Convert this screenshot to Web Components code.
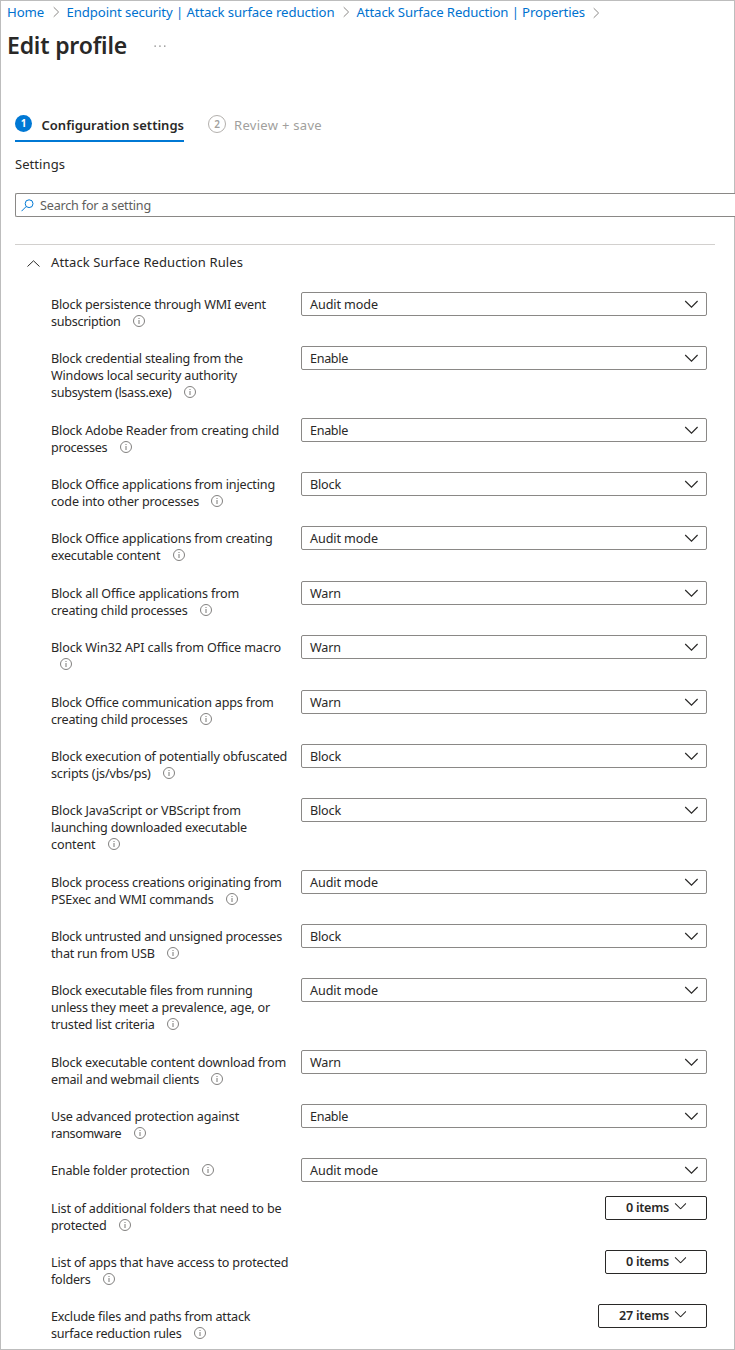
<!DOCTYPE html>
<html lang="en">
<head>
<meta charset="utf-8">
<title>Edit profile</title>
<style>
html,body{margin:0;background:#fff;height:1350px;overflow:hidden}
body{font-family:"Noto Sans","Open Sans",sans-serif;font-size:12.6px;color:#292827}
</style>
</head>
<body>
<profile-page></profile-page>
<script>
const define = (name, html, init) => {
  const t = document.createElement('template');
  t.innerHTML = html;
  customElements.define(name, class extends HTMLElement {
    constructor(){ super(); this.attachShadow({mode:'open'}).append(t.content.cloneNode(true)); }
    connectedCallback(){ if(init) init(this, this.shadowRoot); }
  });
};

/* A single line of text whose tracking is adjusted to an exact width. */
define('fit-line', `<style>:host{display:inline-block;white-space:nowrap;vertical-align:top}span{display:inline-block}</style><span><slot></slot></span>`, (el, root) => {
  const w = +el.getAttribute('w'), s = root.querySelector('span');
  const n = el.textContent.length;
  el.style.letterSpacing = ((w - s.getBoundingClientRect().width) / n) + 'px';
});

define('info-icon', `<style>:host{display:inline-block;width:12px;height:12px}svg{display:block}</style>
<svg width="12" height="12" viewBox="0 0 12 12" fill="none" stroke="#6a6968"><circle cx="6" cy="6" r="5.5" stroke-width=".85"/><path d="M6 5v4M6 3v1" stroke-width=".9"/></svg>`);

define('chevron-down', `<style>:host{display:block}svg{display:block}</style>
<svg width="14" height="8" viewBox="0 0 14 8" fill="none" stroke="#292827" stroke-width="1.15"><path d="M1.2 1 7.5 7.2 13.6 1"/></svg>`);

define('crumb-chevron', `<style>:host{display:block;width:7px;height:12px}svg{display:block}</style>
<svg width="7" height="12" viewBox="0 0 7 12" fill="none" stroke="#8a8886"><path d="M.7 1.2 5.6 6 .7 10.8"/></svg>`);

define('crumb-trail', `<style>
:host{display:flex;align-items:center;height:22px;padding-left:6px;font-size:13.2px;color:#0072cf}
crumb-chevron{margin-top:2px}
.a{margin:0 7px 0 8.5px}.b{margin:0 7px 0 8px}.c{margin-left:8px}
</style><fit-line w="37">Home</fit-line><crumb-chevron class="a"></crumb-chevron><fit-line w="268">Endpoint security | Attack surface reduction</fit-line><crumb-chevron class="b"></crumb-chevron><fit-line w="228.5">Attack Surface Reduction | Properties</fit-line><crumb-chevron class="c"></crumb-chevron>`);

define('page-title', `<style>
:host{display:flex;align-items:center;height:44px;padding-left:6px;font-size:23px;font-weight:600;color:#292827}
h1{margin:0;font:inherit;line-height:44px}
svg{margin-left:26.5px;margin-top:2px}
</style><h1><fit-line w="120">Edit profile</fit-line></h1>
<svg width="12" height="4" viewBox="0 0 12 4" fill="#777"><path d="M.5 1.5h1.3v1.3H.5zM5.3 1.5h1.3v1.3H5.3zM10.1 1.5h1.3v1.3h-1.3z"/></svg>`);

define('wizard-step', `<style>
:host{display:flex;box-sizing:border-box;height:32px;font-size:13px;color:#a19f9d}
:host([active]){border-bottom:2px solid #0078d4;color:#292827;font-weight:600}
b{box-sizing:border-box;width:18px;height:18px;border:1px solid #b3b0ad;border-radius:50%;font-size:10px;line-height:16px;text-align:center;font-weight:600;margin:5px 8px 0 0}
:host([active]) b{width:17px;height:17px;border:0;background:#0078d4;color:#fff;line-height:17px;margin:5px 9.5px 0 0;font-weight:700}
.t{line-height:18px;margin-top:6px}
</style><b></b><div class="t"><slot></slot></div>`, (el, root) => root.querySelector('b').textContent = el.getAttribute('n'));

define('search-field', `<style>
:host{display:flex;align-items:center;box-sizing:border-box;width:720px;height:24px;border:1px solid #8a8886;border-right:0;border-radius:2px 0 0 2px;padding-left:5px;color:#605e5c;background:#fff;position:relative}
svg{margin-right:6px}
</style><svg width="13" height="13" viewBox="0 0 13 13" fill="none" stroke="#0078d4" stroke-width="1"><circle cx="8.1" cy="4.7" r="3.9"/><path d="M5.2 7.5.5 12.2"/></svg><fit-line w="111">Search for a setting</fit-line>`);

define('drop-box', `<style>
:host{display:flex;align-items:center;justify-content:space-between;box-sizing:border-box;width:406px;height:24px;border:1px solid #8a8886;border-radius:2px;padding:0 8px;background:#fff}
</style><slot></slot><chevron-down></chevron-down>`);

define('items-button', `<style>
:host{display:flex;align-items:center;box-sizing:border-box;height:24px;border:1px solid #292827;border-radius:2px;padding:0 20px 2px;font-weight:600;background:#fff}
chevron-down{width:12px;margin:-2px 0 0 5px;transform:scale(.88);transform-origin:0 50%}
</style><slot></slot><chevron-down></chevron-down>`);

define('setting-row', `<style>
:host{display:flex;justify-content:space-between;box-sizing:border-box;width:656px}
.label{width:250px;padding-top:4px}
.line{display:flex;height:17px;line-height:17px}
info-icon{margin:2.4px 0 0 12.3px}
info-icon.alone{margin-left:9px}
</style><div class="label"></div><slot></slot>`, (el, root) => {
  const label = root.querySelector('.label');
  const [h, lines] = el.data;
  el.style.height = h + 'px';
  lines.forEach(([text, end], i) => {
    const d = document.createElement('div'); d.className = 'line';
    label.append(d);
    if (text) d.innerHTML = `<fit-line w="${end - 51}">${text}</fit-line>`;
    if (i === lines.length - 1) {
      const icon = document.createElement('info-icon');
      if (!text) icon.className = 'alone';
      d.append(icon);
    }
  });
});

define('settings-list', `<style>:host{display:block;padding-left:36px}</style>`, (el, root) => {
  const W = {'Audit mode':68, Enable:38, Block:31, Warn:31, '0 items':43, '27 items':50};
  const rows = [
    [54,[['Block persistence through WMI event',266],['subscription',120.5]],'Audit mode'],
    [72,[['Block credential stealing from the',243],['Windows local security authority',237],['subsystem (lsass.exe)',171.5]],'Enable'],
    [54,[['Block Adobe Reader from creating child',279],['processes',107.3]],'Enable'],
    [54,[['Block Office applications from injecting',275],['code into other processes',199]],'Block'],
    [55,[['Block Office applications from creating',272.5],['executable content',160.3]],'Audit mode'],
    [54,[['Block all Office applications from',239],['creating child processes',187.5]],'Warn'],
    [55,[['Block Win32 API calls from Office macro',281],['',0]],'Warn'],
    [54,[['Block Office communication apps from',273.7],['creating child processes',187.5]],'Warn'],
    [54,[['Block execution of potentially obfuscated',287.2],['scripts (js/vbs/ps)',150.7]],'Block'],
    [72,[['Block JavaScript or VBScript from',241],['launching downloaded executable',247],['content',95.5]],'Block'],
    [54,[['Block process creations originating from',281.7],['PSExec and WMI commands',213.5]],'Audit mode'],
    [54,[['Block untrusted and unsigned processes',282],['that run from USB',154.7]],'Block'],
    [72,[['Block executable files from running',252.5],['unless they meet a prevalence, age, or',270],['trusted list criteria',154.5]],'Audit mode'],
    [54,[['Block executable content download from',286],['email and webmail clients',199]],'Warn'],
    [54,[['Use advanced protection against',239],['ransomware',121.3]],'Enable'],
    [38,[['Enable folder protection',189.5]],'Audit mode'],
    [54,[['List of additional folders that need to be',281.5],['protected',106.5]],'0 items'],
    [54,[['List of apps that have access to protected',288.3],['folders',90.5]],'0 items'],
    [44,[['Exclude files and paths from attack',250.3],['surface reduction rules',181.5]],'27 items']
  ];
  for (const [h, lines, value] of rows) {
    const r = document.createElement('setting-row');
    r.data = [h, lines];
    const tag = value.endsWith('items') ? 'items-button' : 'drop-box';
    r.innerHTML = `<${tag}><fit-line w="${W[value]}">${value}</fit-line></${tag}>`;
    root.append(r);
  }
});

define('profile-page', `<style>
:host{display:block;box-sizing:border-box;width:735px;height:1350px;border:1px solid #bdbdbd;background:#fff}
main{padding:43px 0 0 14px}
nav{display:flex;gap:24px}
.settings{margin-top:13px;height:18px;line-height:18px;font-size:13px}
search-field{margin-top:20px}
hr{border:0;height:1px;background:#d2d0ce;width:700px;margin:27px 0 0}
.group{display:flex;align-items:center;height:34px;padding-left:12px;font-size:13px}
.group svg{margin:2px 11px 0 0}
settings-list{padding-top:13px}
</style>
<crumb-trail></crumb-trail>
<page-title></page-title>
<main>
<nav><wizard-step n="1" active><fit-line w="142.5">Configuration settings</fit-line></wizard-step><wizard-step n="2"><fit-line w="88">Review + save</fit-line></wizard-step></nav>
<div class="settings"><fit-line w="50">Settings</fit-line></div>
<search-field></search-field>
<hr>
<div class="group"><svg width="13" height="7" viewBox="0 0 13 7" fill="none" stroke="#292827"><path d="M.5 6.5l6-5.7 6 5.7"/></svg><fit-line w="192">Attack Surface Reduction Rules</fit-line></div>
<settings-list></settings-list>
</main>`);
</script>
</body>
</html>
